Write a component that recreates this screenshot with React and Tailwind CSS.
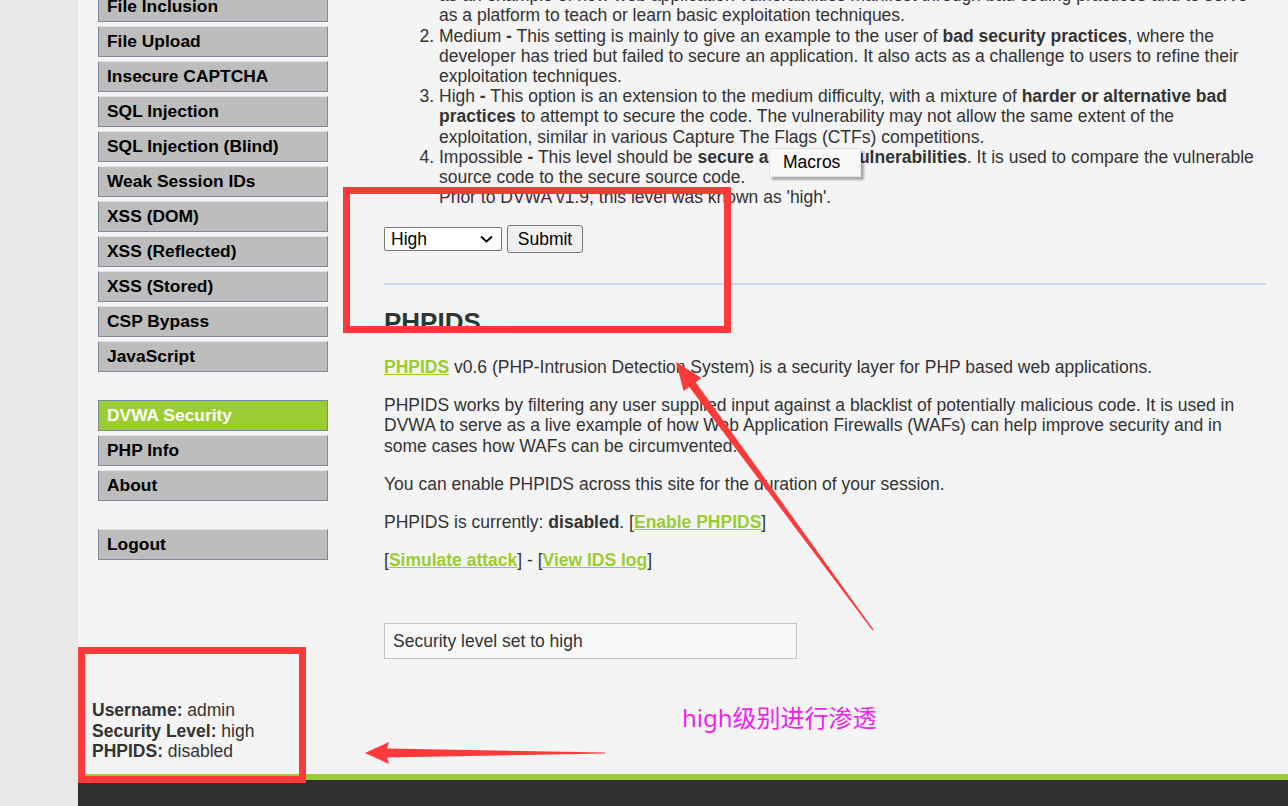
const menuTop = [
  "File Inclusion",
  "File Upload",
  "Insecure CAPTCHA",
  "SQL Injection",
  "SQL Injection (Blind)",
  "Weak Session IDs",
  "XSS (DOM)",
  "XSS (Reflected)",
  "XSS (Stored)",
  "CSP Bypass",
  "JavaScript",
];

const MenuItem = ({ label, active }) => (
  <li
    className={
      active
        ? "flex h-[31px] items-center border border-[#7d889b] bg-[#9acd32] pl-[8px] text-[17.4px] font-bold text-white"
        : "flex h-[31px] items-center border border-[#7d889b] border-t-[#e2e2e2] bg-[#bdbdbd] pl-[8px] text-[17.4px] font-bold text-black"
    }
  >
    {label}
  </li>
);

const Link = ({ children }) => (
  <a href="#" className="font-bold text-[#9acd32] underline">
    {children}
  </a>
);

const Annotations = () => (
  <>
    <div className="pointer-events-none absolute left-[343px] top-[187px] h-[146px] w-[388px] border-[7px] border-[#fc3a3a]" />
    <div className="pointer-events-none absolute left-[78px] top-[647px] h-[136px] w-[228px] border-[7px] border-[#fc3a3a]" />
    <svg
      className="pointer-events-none absolute left-0 top-0"
      width="1288"
      height="806"
      viewBox="0 0 1288 806"
    >
      <polygon
        fill="#fc3a3a"
        points="676,362 683.6,391.1 689.3,387 872.5,630.4 873.5,629.6 695.7,382.2 701.4,378.1"
      />
      <polygon
        fill="#fc3a3a"
        points="365,753 389,742 387,748.5 605,752.5 605,753.5 387,757.5 389,764"
      />
    </svg>
    <div className="absolute left-[682px] top-[702px] text-[24px] leading-[32px] text-[#ee22ee] font-['Noto_Sans','Noto_Sans_CJK_SC',sans-serif]">
      high级别进行渗透
    </div>
    <div className="absolute left-[769px] top-[148px] flex h-[29px] w-[92px] items-center border border-[#e3e3e3] bg-[#f8f8f8] pl-[13px] text-[17.5px] text-black shadow-[3px_3px_2px_rgba(0,0,0,0.3)]">
      Macros
    </div>
  </>
);

const App = () => {
  return (
    <div className="relative flex h-[806px] w-[1288px] overflow-hidden bg-[#e8e8e8] text-[#333] font-['Liberation_Sans',Arial,sans-serif]">
      <div className="w-[78px] shrink-0" />

      <div className="flex flex-1 flex-col bg-[#f4f4f4]">
        <div className="flex flex-1 flex-col overflow-hidden">
          <div className="flex">
            <nav className="ml-[20px] -mt-[9px] w-[230px] shrink-0">
              <ul className="flex flex-col gap-[4px]">
                {menuTop.map((m) => (
                  <MenuItem key={m} label={m} />
                ))}
              </ul>
              <ul className="mt-[28px] flex flex-col gap-[4px]">
                <MenuItem label="DVWA Security" active />
                <MenuItem label="PHP Info" />
                <MenuItem label="About" />
              </ul>
              <ul className="mt-[28px] flex flex-col gap-[4px]">
                <MenuItem label="Logout" />
              </ul>
            </nav>

            <main className="ml-[56px] -mt-[35px] w-[882px] text-[17.5px] leading-[20.2px]">
              <ol className="list-decimal whitespace-nowrap pl-[55px]">
                <li>
                  Low <b>-</b> This security level is completely vulnerable and <b>has no security measures at all</b>. It's use is to be
                  <br />
                  as an example of how web application vulnerabilities manifest through bad coding practices and to serve
                  <br />
                  as a platform to teach or learn basic exploitation techniques.
                </li>
                <li>
                  Medium <b>-</b> This setting is mainly to give an example to the user of <b>bad security practices</b>, where the
                  <br />
                  developer has tried but failed to secure an application. It also acts as a challenge to users to refine their
                  <br />
                  exploitation techniques.
                </li>
                <li>
                  High <b>-</b> This option is an extension to the medium difficulty, with a mixture of <b>harder or alternative bad</b>
                  <br />
                  <b>practices</b> to attempt to secure the code. The vulnerability may not allow the same extent of the
                  <br />
                  exploitation, similar in various Capture The Flags (CTFs) competitions.
                </li>
                <li>
                  Impossible <b>-</b> This level should be <b>secure against all vulnerabilities</b>. It is used to compare the vulnerable
                  <br />
                  source code to the secure source code.
                  <br />
                  Prior to DVWA v1.9, this level was known as 'high'.
                </li>
              </ol>

              <form className="mt-[17.7px] flex h-[28px] items-center gap-[5px]">
                <div className="flex h-[24px] w-[118px] items-center justify-between rounded-[2px] border border-[#767676] bg-white pl-[6px] pr-[8px] text-black">
                  <span>High</span>
                  <svg width="13" height="8" viewBox="0 0 13 8" fill="none">
                    <path d="M1 1.5 L6.5 6.5 L12 1.5" stroke="#000" strokeWidth="1.8" />
                  </svg>
                </div>
                <button
                  type="button"
                  className="h-[28px] w-[76px] rounded-[3px] border border-[#767676] bg-[#efefef] text-[17.5px] text-black"
                >
                  Submit
                </button>
              </form>

              <div className="mt-[30px] h-[2px] w-[882px] bg-[#c5d9fa]" />

              <h2 className="mt-[22px] text-[26px] font-bold leading-[30px]">PHPIDS</h2>

              <p className="mt-[20px]">
                <Link>PHPIDS</Link> v0.6 (PHP-Intrusion Detection System) is a security layer for PHP based web applications.
              </p>
              <p className="mt-[17.8px] whitespace-nowrap">
                PHPIDS works by filtering any user supplied input against a blacklist of potentially malicious code. It is used in
                <br />
                DVWA to serve as a live example of how Web Application Firewalls (WAFs) can help improve security and in
                <br />
                some cases how WAFs can be circumvented.
              </p>
              <p className="mt-[17.8px]">You can enable PHPIDS across this site for the duration of your session.</p>
              <p className="mt-[17.8px]">
                PHPIDS is currently: <b>disabled</b>. [<Link>Enable PHPIDS</Link>]
              </p>
              <p className="mt-[17.8px]">
                [<Link>Simulate attack</Link>] - [<Link>View IDS log</Link>]
              </p>

              <div className="mt-[53.5px] flex h-[36px] w-[413px] items-center border border-[#c4c4c4] bg-[#f7f8f8] pl-[8px]">
                Security level set to high
              </div>
            </main>
          </div>

          <div className="ml-[14px] mt-auto pb-[13px] text-[17.5px] leading-[20.2px]">
            <div>
              <b>Username:</b> admin
            </div>
            <div>
              <b>Security Level:</b> high
            </div>
            <div>
              <b>PHPIDS:</b> disabled
            </div>
          </div>
        </div>

        <footer className="h-[32px] border-t-[6px] border-[#9acd32] bg-[#2f2f2f]" />
      </div>

      <Annotations />
    </div>
  );
};

export default App;
